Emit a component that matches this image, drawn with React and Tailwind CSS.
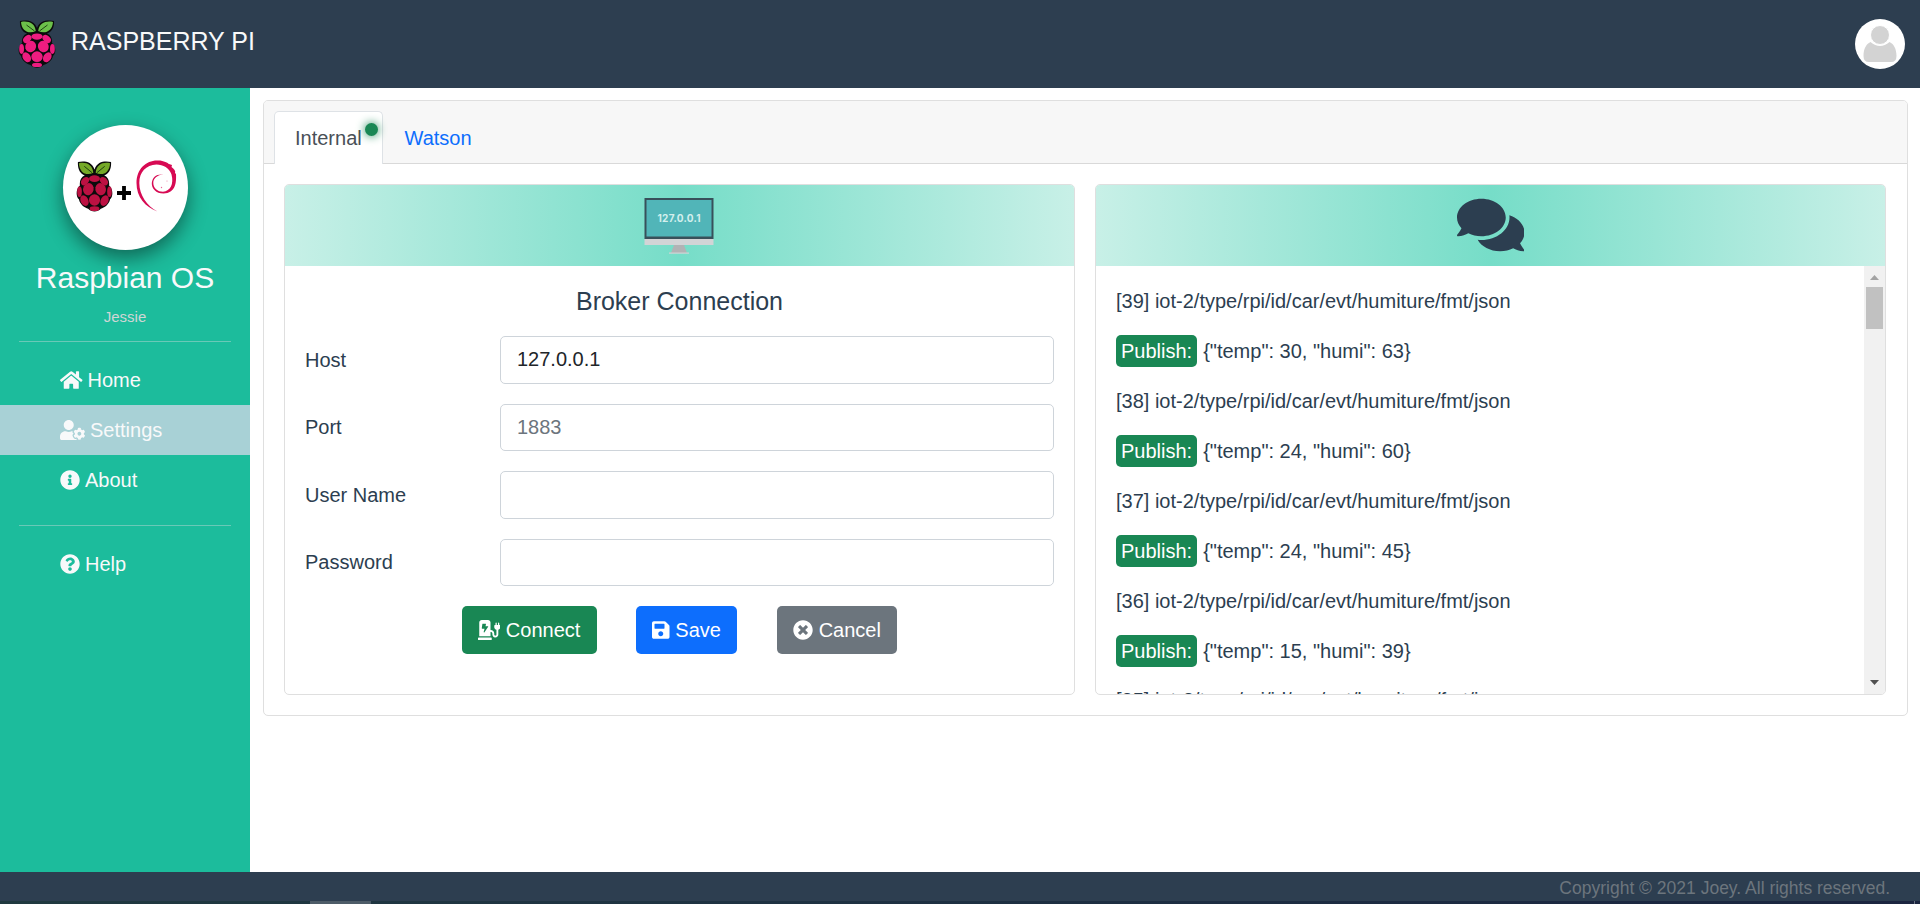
import React from "react";
import {
  FaHome, FaUserCog, FaInfoCircle, FaQuestionCircle, FaChargingStation,
  FaSave, FaTimesCircle, FaComments,
} from "react-icons/fa";

function Berry({ className, fruit, leaf }) {
  return (
    <svg className={className} viewBox="0 0 38 48" preserveAspectRatio="none">
      <path d="M19 8 C16 0 8 0 2 1 C1.500 7 4 12 9 13.500 C5 15 3.500 19 4 23 C0 26 -0.500 33 3 36 C4 41 9 44 12.500 45 C16 48.500 22 48.500 25.500 45 C29 44 34 41 35 36 C38.500 33 38 26 34 23 C34.500 19 33 15 29 13.500 C34 12 36.500 7 36 1 C30 0 22 0 19 8Z" fill="#0b0b0b" />
      <path d="M3 2 C10 0.500 17 3 17.800 11 C11 14.500 3.500 11 3 2Z M35 2 C28 0.500 21 3 20.200 11 C27 14.500 34.500 11 35 2Z" fill={leaf} />
      <path d="M8.500 5 L16.500 11 M29.500 5 L21.500 11" stroke="#17330f" strokeWidth="0.900" fill="none" />
      <g fill={fruit}>
        <ellipse cx="19" cy="16.600" rx="5.600" ry="3.200" />
        <ellipse cx="9.300" cy="19" rx="4.700" ry="3.300" transform="rotate(-42 9.3 19)" />
        <ellipse cx="28.700" cy="19" rx="4.700" ry="3.300" transform="rotate(42 28.7 19)" />
        <ellipse cx="12.700" cy="26.500" rx="5.300" ry="5.800" transform="rotate(30 12.7 26.5)" />
        <ellipse cx="25.300" cy="26.500" rx="5.300" ry="5.800" transform="rotate(-30 25.3 26.5)" />
        <ellipse cx="3.600" cy="29" rx="2.400" ry="4.900" />
        <ellipse cx="34.400" cy="29" rx="2.400" ry="4.900" />
        <ellipse cx="19" cy="36.700" rx="5.700" ry="5.400" />
        <ellipse cx="8.700" cy="37.300" rx="3.900" ry="5.300" transform="rotate(-32 8.7 37.3)" />
        <ellipse cx="29.300" cy="37.300" rx="3.900" ry="5.300" transform="rotate(32 29.3 37.3)" />
        <ellipse cx="19" cy="44.900" rx="5" ry="2.200" />
      </g>
    </svg>
  );
}

function NavItem({ icon, label, active }) {
  return (
    <a className={`flex h-[50px] items-center pl-[60px] ${active ? "bg-[#a8d1d6]" : ""}`}>
      {icon}
      <span className="ml-[5px]">{label}</span>
    </a>
  );
}

function Field({ label, value, placeholder }) {
  return (
    <div className="flex h-[47.5px] items-center">
      <label className="w-[195px] shrink-0">{label}</label>
      <input
        className="h-full min-w-0 flex-1 rounded-[5px] border border-[#ced4da] bg-white px-4 text-[#212529] placeholder-[#6c757d] outline-none"
        defaultValue={value}
        placeholder={placeholder}
      />
    </div>
  );
}

function Panel({ icon, children }) {
  return (
    <section className="flex h-[511px] w-[791px] flex-col overflow-hidden rounded-[5px] border border-[#dfdfdf] bg-white">
      <div className="flex h-[81px] shrink-0 justify-center bg-[linear-gradient(90deg,#c8f0e7,#76ddc8_50%,#c8f0e7)]">
        {icon}
      </div>
      {children}
    </section>
  );
}

function Monitor() {
  return (
    <svg className="mr-px mt-[13px] h-[57px] w-[70px]" viewBox="0 0 70 57">
      <rect x="0.500" y="0" width="69" height="41" fill="#38505a" />
      <rect x="2.500" y="2" width="65" height="36.500" fill="#51b5b8" />
      <rect x="0.500" y="41" width="69" height="6" fill="#d2d4d6" />
      <path d="M30 47 H40 L43 55 H27Z" fill="#b1b3b5" />
      <rect x="25" y="54.500" width="20" height="1.200" fill="#d2d4d6" />
      <text x="35" y="23.500" textAnchor="middle" fontSize="10" fontWeight="700" fill="#d3efed" fontFamily="Inter, sans-serif" textLength="43">127.0.0.1</text>
    </svg>
  );
}

const MESSAGES = [
  [39, 30, 63],
  [38, 24, 60],
  [37, 24, 45],
  [36, 15, 39],
];

export default function App() {
  return (
    <div className="flex h-[904px] w-[1920px] flex-col overflow-hidden bg-white font-['Liberation_Sans',Arial,sans-serif] text-[20px] leading-[30px] text-[#2c3e50]">
      <header className="flex h-[88px] shrink-0 items-center justify-between bg-[#2d3e50] pl-[18px] pr-[15px]">
        <div className="flex items-center text-[#f8f9fa]">
          <Berry className="h-[48px] w-[38px]" fruit="#ee1c80" leaf="#6cc04a" />
          <span className="mb-[7px] ml-[15px] text-[25px]">RASPBERRY PI</span>
        </div>
        <svg className="h-[50px] w-[50px]" viewBox="0 0 50 50">
          <circle cx="25" cy="25" r="25" fill="#fff" />
          <path d="M15.500 23 Q25 31 34.500 23 C39 25 41.500 30 41.500 37 Q41.500 43 36 43 H14 Q8.500 43 8.500 37 C8.500 30 11 25 15.500 23Z" fill="#d3d3d3" />
          <circle cx="25" cy="16" r="9.500" fill="#d3d3d3" stroke="#fff" strokeWidth="1" />
        </svg>
      </header>

      <div className="flex min-h-0 flex-1">
        <aside className="flex w-[250px] shrink-0 flex-col bg-[#1cbc9c] text-[#f8f9fa]">
          <div className="mt-[37px] flex h-[125px] w-[125px] items-center self-center rounded-full bg-white pb-[3px] pl-[13px] shadow-[0_8px_20px_rgba(0,0,0,0.45)]">
            <Berry className="h-[51px] w-[37px]" fruit="#bc1142" leaf="#75a928" />
            <svg className="ml-[4px] mt-[13px] h-[14px] w-[14px]" viewBox="0 0 14 14">
              <path d="M7 0V14M0 7H14" stroke="#000" strokeWidth="3.800" />
            </svg>
            <svg className="ml-[5px] h-[52px] w-[41px]" viewBox="0 0 41 52">
              <path d="M21.500 51.500 C9 47 0.500 37 0.500 23 C0.500 9 10 0.500 21 0.500 C27 0 32 3 33 4 L36 5 L35.500 7 C38 9 40 11 39 13 L40 14 C40.500 23 39.500 33 27.500 33.500 C20 33.500 15.500 28.500 15.800 23 C16.500 17 20 13.800 27.500 14.500 C21 14.800 17.300 18.500 17.300 23 C17.300 28 21.500 31.800 27 31.800 C34.500 31 38 24 35.500 14.500 C33.500 8 27 4.500 20.500 4.500 C10 5 3.300 12 3.300 23 C3.300 35 11 46 21.500 51.500Z" fill="#d70a53" />
              <circle cx="25.500" cy="27.500" r="0.700" fill="#e76b98" />
              <circle cx="31" cy="21" r="0.500" fill="#e76b98" />
            </svg>
          </div>
          <h1 className="mt-[10px] text-center text-[30px] leading-[36px]">Raspbian OS</h1>
          <p className="mt-[10px] text-center text-[15px] leading-[22px] text-[#cfd6d5]">Jessie</p>
          <hr className="mx-[19px] mt-[13px] border-[#69c9b7]" />
          <nav className="mt-[13px] flex flex-col">
            <NavItem icon={<FaHome className="h-[20px] w-[22.5px]" />} label="Home" />
            <NavItem active icon={<FaUserCog className="h-[20px] w-[25px]" />} label="Settings" />
            <NavItem icon={<FaInfoCircle className="h-[20px] w-[20px]" />} label="About" />
            <hr className="mx-[19px] mb-[13px] mt-5 border-[#69c9b7]" />
            <NavItem icon={<FaQuestionCircle className="h-[20px] w-[20px]" />} label="Help" />
          </nav>
        </aside>

        <main className="flex-1 pl-[13px] pr-3 pt-3">
          <div className="flex h-[616px] flex-col rounded-[5px] border border-[#dfdfdf]">
            <div className="flex h-[63px] shrink-0 items-end rounded-t-[4px] border-b border-[#d9d9d9] bg-[#f7f7f7] pl-[10px]">
              <div className="relative -mb-px flex h-[53px] w-[109px] items-center rounded-t-[5px] border border-b-0 border-[#dee2e6] bg-white pl-[20px] text-[#495057]">
                Internal
                <span className="absolute left-[90px] top-[11px] h-[12.500px] w-[13px] rounded-full bg-[#198754] shadow-[0_0_10px_#198754]" />
              </div>
              <a className="flex h-[51px] items-center pl-[21.5px] text-[#0d6efd]">Watson</a>
            </div>
            <div className="flex gap-5 px-5 pt-5">
              <Panel icon={<Monitor />}>
                <div className="flex flex-col gap-5 p-5">
                  <h2 className="text-center text-[25px] leading-[30px]">Broker Connection</h2>
                  <Field label="Host" value="127.0.0.1" />
                  <Field label="Port" placeholder="1883" />
                  <Field label="User Name" />
                  <Field label="Password" />
                  <div className="flex justify-center gap-[39.500px] text-white">
                    <button className="flex h-[48px] items-center gap-[5.500px] rounded-[5px] bg-[#198754] px-[16.250px]">
                      <FaChargingStation className="h-[20px] w-[22.500px]" />Connect
                    </button>
                    <button className="flex h-[48px] items-center gap-[5.500px] rounded-[5px] bg-[#0d6efd] px-[16.250px]">
                      <FaSave className="h-[20px] w-[17.500px]" />Save
                    </button>
                    <button className="flex h-[48px] items-center gap-[5.500px] rounded-[5px] bg-[#6c757d] px-[16.500px]">
                      <FaTimesCircle className="h-[20px] w-[20px]" />Cancel
                    </button>
                  </div>
                </div>
              </Panel>
              <Panel icon={<FaComments className="mt-[10px] h-[60px] w-[67.500px]" />}>
                <div className="flex min-h-0 flex-1">
                  <div className="flex flex-1 flex-col gap-5 overflow-hidden p-5 pb-0">
                    {MESSAGES.map(([id, temp, humi]) => (
                      <React.Fragment key={id}>
                        <p className="h-[30px] shrink-0">[{id}] iot-2/type/rpi/id/car/evt/humiture/fmt/json</p>
                        <p className="flex h-[30px] shrink-0 items-center">
                          <span className="mr-[6px] flex h-[32px] items-center rounded-[5px] bg-[#198754] px-[5px] text-white">Publish:</span>
                          {`{"temp": ${temp}, "humi": ${humi}}`}
                        </p>
                      </React.Fragment>
                    ))}
                    <p className="-mt-px h-[30px] shrink-0">[35] iot-2/type/rpi/id/car/evt/humiture/fmt/json</p>
                  </div>
                  <div className="flex w-[21px] flex-col items-center bg-[#f1f1f1]">
                    <svg className="h-[21px] w-[21px]" viewBox="0 0 21 21"><path d="M6 14H15L10.500 9Z" fill="#a3a3a3" /></svg>
                    <div className="h-[42px] w-[17px] bg-[#c1c1c1]" />
                    <svg className="mt-auto h-[21px] w-[21px]" viewBox="0 0 21 21"><path d="M6 7H15L10.500 12Z" fill="#505050" /></svg>
                  </div>
                </div>
              </Panel>
            </div>
          </div>
        </main>
      </div>

      <footer className="flex h-[32px] shrink-0 flex-col bg-[#2d3e50]">
        <p className="h-[29px] pr-[30px] text-right text-[17.500px] leading-[32px] text-[#6c757d]">Copyright © 2021 Joey. All rights reserved.</p>
        <div className="flex h-[3px] justify-between bg-[linear-gradient(90deg,#20393f,#1e3242_40%,#1b2540)] pl-[310px] pr-[5px]">
          <div className="w-[61px] bg-[#4d5c68]" />
          <div className="w-px bg-[#6b7385]" />
        </div>
      </footer>
    </div>
  );
}
